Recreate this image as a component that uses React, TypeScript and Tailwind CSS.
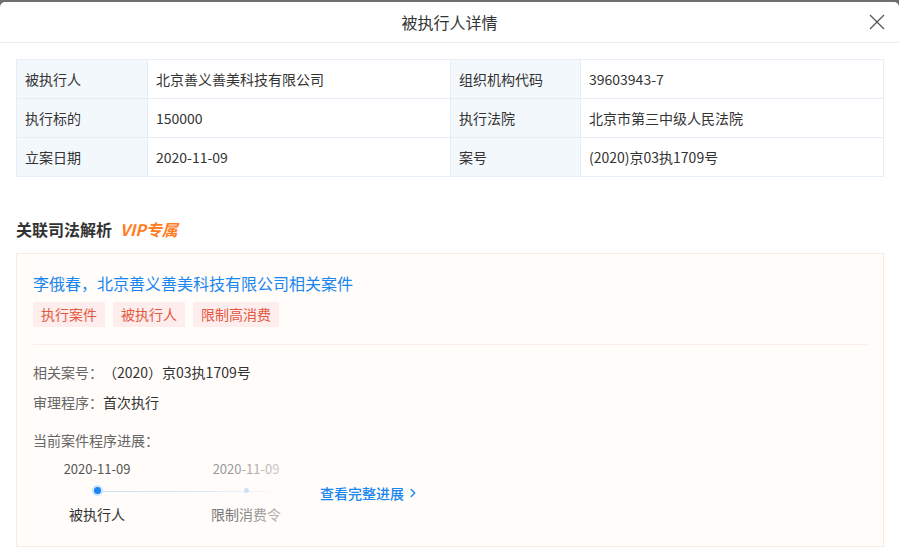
import { ChevronRight } from "lucide-react";

const rows = [
  ["被执行人", "北京善义善美科技有限公司", "组织机构代码", "39603943-7"],
  ["执行标的", "150000", "执行法院", "北京市第三中级人民法院"],
  ["立案日期", "2020-11-09", "案号", "(2020)京03执1709号"],
];

const tags = ["执行案件", "被执行人", "限制高消费"];

export default function App() {
  return (
    <div
      className="w-[899px] h-[560px] bg-[#6e6e6e] pt-[2px] overflow-hidden [text-spacing-trim:space-all]"
      style={{ fontFamily: '"Noto Sans CJK SC", "Liberation Sans", sans-serif' }}
    >
      <div className="h-full bg-white rounded-t-[5px]">
        {/* Header */}
        <div className="relative h-[41px] border-b border-[#ececec] flex items-center justify-center">
          <span className="text-[16px] leading-[20px] text-[#333]">被执行人详情</span>
          <button className="absolute right-[14px] top-[12px] w-[16px] h-[16px] text-[#555]">
            <svg viewBox="0 0 16 16" className="w-[16px] h-[16px]" fill="none" stroke="currentColor" strokeWidth="1.3">
              <path d="M1 1 L15 15 M15 1 L1 15" />
            </svg>
          </button>
        </div>

        <div className="px-4 pt-4">
          {/* Info table */}
          <table className="w-[868px] border-collapse text-[14px] text-[#333]">
            <tbody>
              {rows.map((r) => (
                <tr key={r[0]} className="h-[39px]">
                  <td className="w-[131px] border border-[#e5eef6] bg-[#f3f8fd] pl-[8px]">{r[0]}</td>
                  <td className="w-[303px] border border-[#e5eef6] pl-[8px]">{r[1]}</td>
                  <td className="w-[130px] border border-[#e5eef6] bg-[#f3f8fd] pl-[8px]">{r[2]}</td>
                  <td className="border border-[#e5eef6] pl-[8px]">{r[3]}</td>
                </tr>
              ))}
            </tbody>
          </table>

          {/* Section title */}
          <div className="mt-[40px] flex items-center h-[24px]">
            <span className="text-[16px] font-bold text-[#333]">关联司法解析</span>
            <span className="ml-[8px] text-[16px] font-bold italic text-[#ff7d1f]">VIP专属</span>
          </div>

          {/* Card */}
          <div className="mt-[12px] w-[868px] h-[294px] border border-[#fbece2] bg-[#fffcf9] px-[16px] pt-[17px]">
            <div className="text-[16px] leading-[24px] text-[#1a86f0]">李俄春，北京善义善美科技有限公司相关案件</div>
            <div className="mt-[7px] flex gap-[8px]">
              {tags.map((t) => (
                <span key={t} className="h-[25px] leading-[25px] px-[8px] bg-[#fdeded] text-[#e4583f] text-[14px]">
                  {t}
                </span>
              ))}
            </div>
            <div className="mt-[17px] h-px bg-[#fbeee6]" />

            <div className="mt-[12px] text-[14px] leading-[30px]">
              <div>
                <span className="text-[#666]">相关案号：</span>
                <span className="text-[#333]">（2020）京03执1709号</span>
              </div>
              <div>
                <span className="text-[#666]">审理程序：</span>
                <span className="text-[#333]">首次执行</span>
              </div>
            </div>
            <div className="mt-[11px] text-[14px] leading-[24px] text-[#666]">当前案件程序进展：</div>

            {/* Timeline */}
            <div className="mt-[8px] flex items-center">
              <div className="relative flex gap-[21px]">
                <div className="absolute left-[64px] top-[31px] w-[200px] h-px bg-gradient-to-r from-[#c9defa] via-[#d6e7fb] to-[#fffcf9]" />
                <div className="relative w-[128px] flex flex-col items-center">
                  <span className="text-[13px] leading-[18px] text-[#555]">2020-11-09</span>
                  <span className="h-[24px] flex items-center pt-px">
                    <span className="w-[11px] h-[11px] rounded-full bg-[#cfe3fb] flex items-center justify-center">
                      <span className="w-[7px] h-[7px] rounded-full bg-[#1a86f0]" />
                    </span>
                  </span>
                  <span className="text-[14px] leading-[24px] text-[#333]">被执行人</span>
                </div>
                <div className="relative w-[128px] flex flex-col items-center">
                  <span className="text-[13px] leading-[18px] text-[#999]">2020-11-09</span>
                  <span className="h-[24px] flex items-center pt-px">
                    <span className="w-[5px] h-[5px] rounded-full bg-[#c3dbf8]" />
                  </span>
                  <span className="text-[14px] leading-[24px] text-[#777]">限制消费令</span>
                </div>
                <div className="absolute left-[200px] top-0 w-[77px] h-full bg-gradient-to-r from-[#fffcf9]/0 via-[#fffcf9]/40 to-[#fffcf9]" />
              </div>
              <a className="ml-[10px] flex items-center text-[14px] font-medium text-[#1a86f0]">
                查看完整进展
                <ChevronRight className="w-[14px] h-[14px] ml-[2px]" strokeWidth={2.5} />
              </a>
            </div>
          </div>
        </div>
      </div>
    </div>
  );
}
